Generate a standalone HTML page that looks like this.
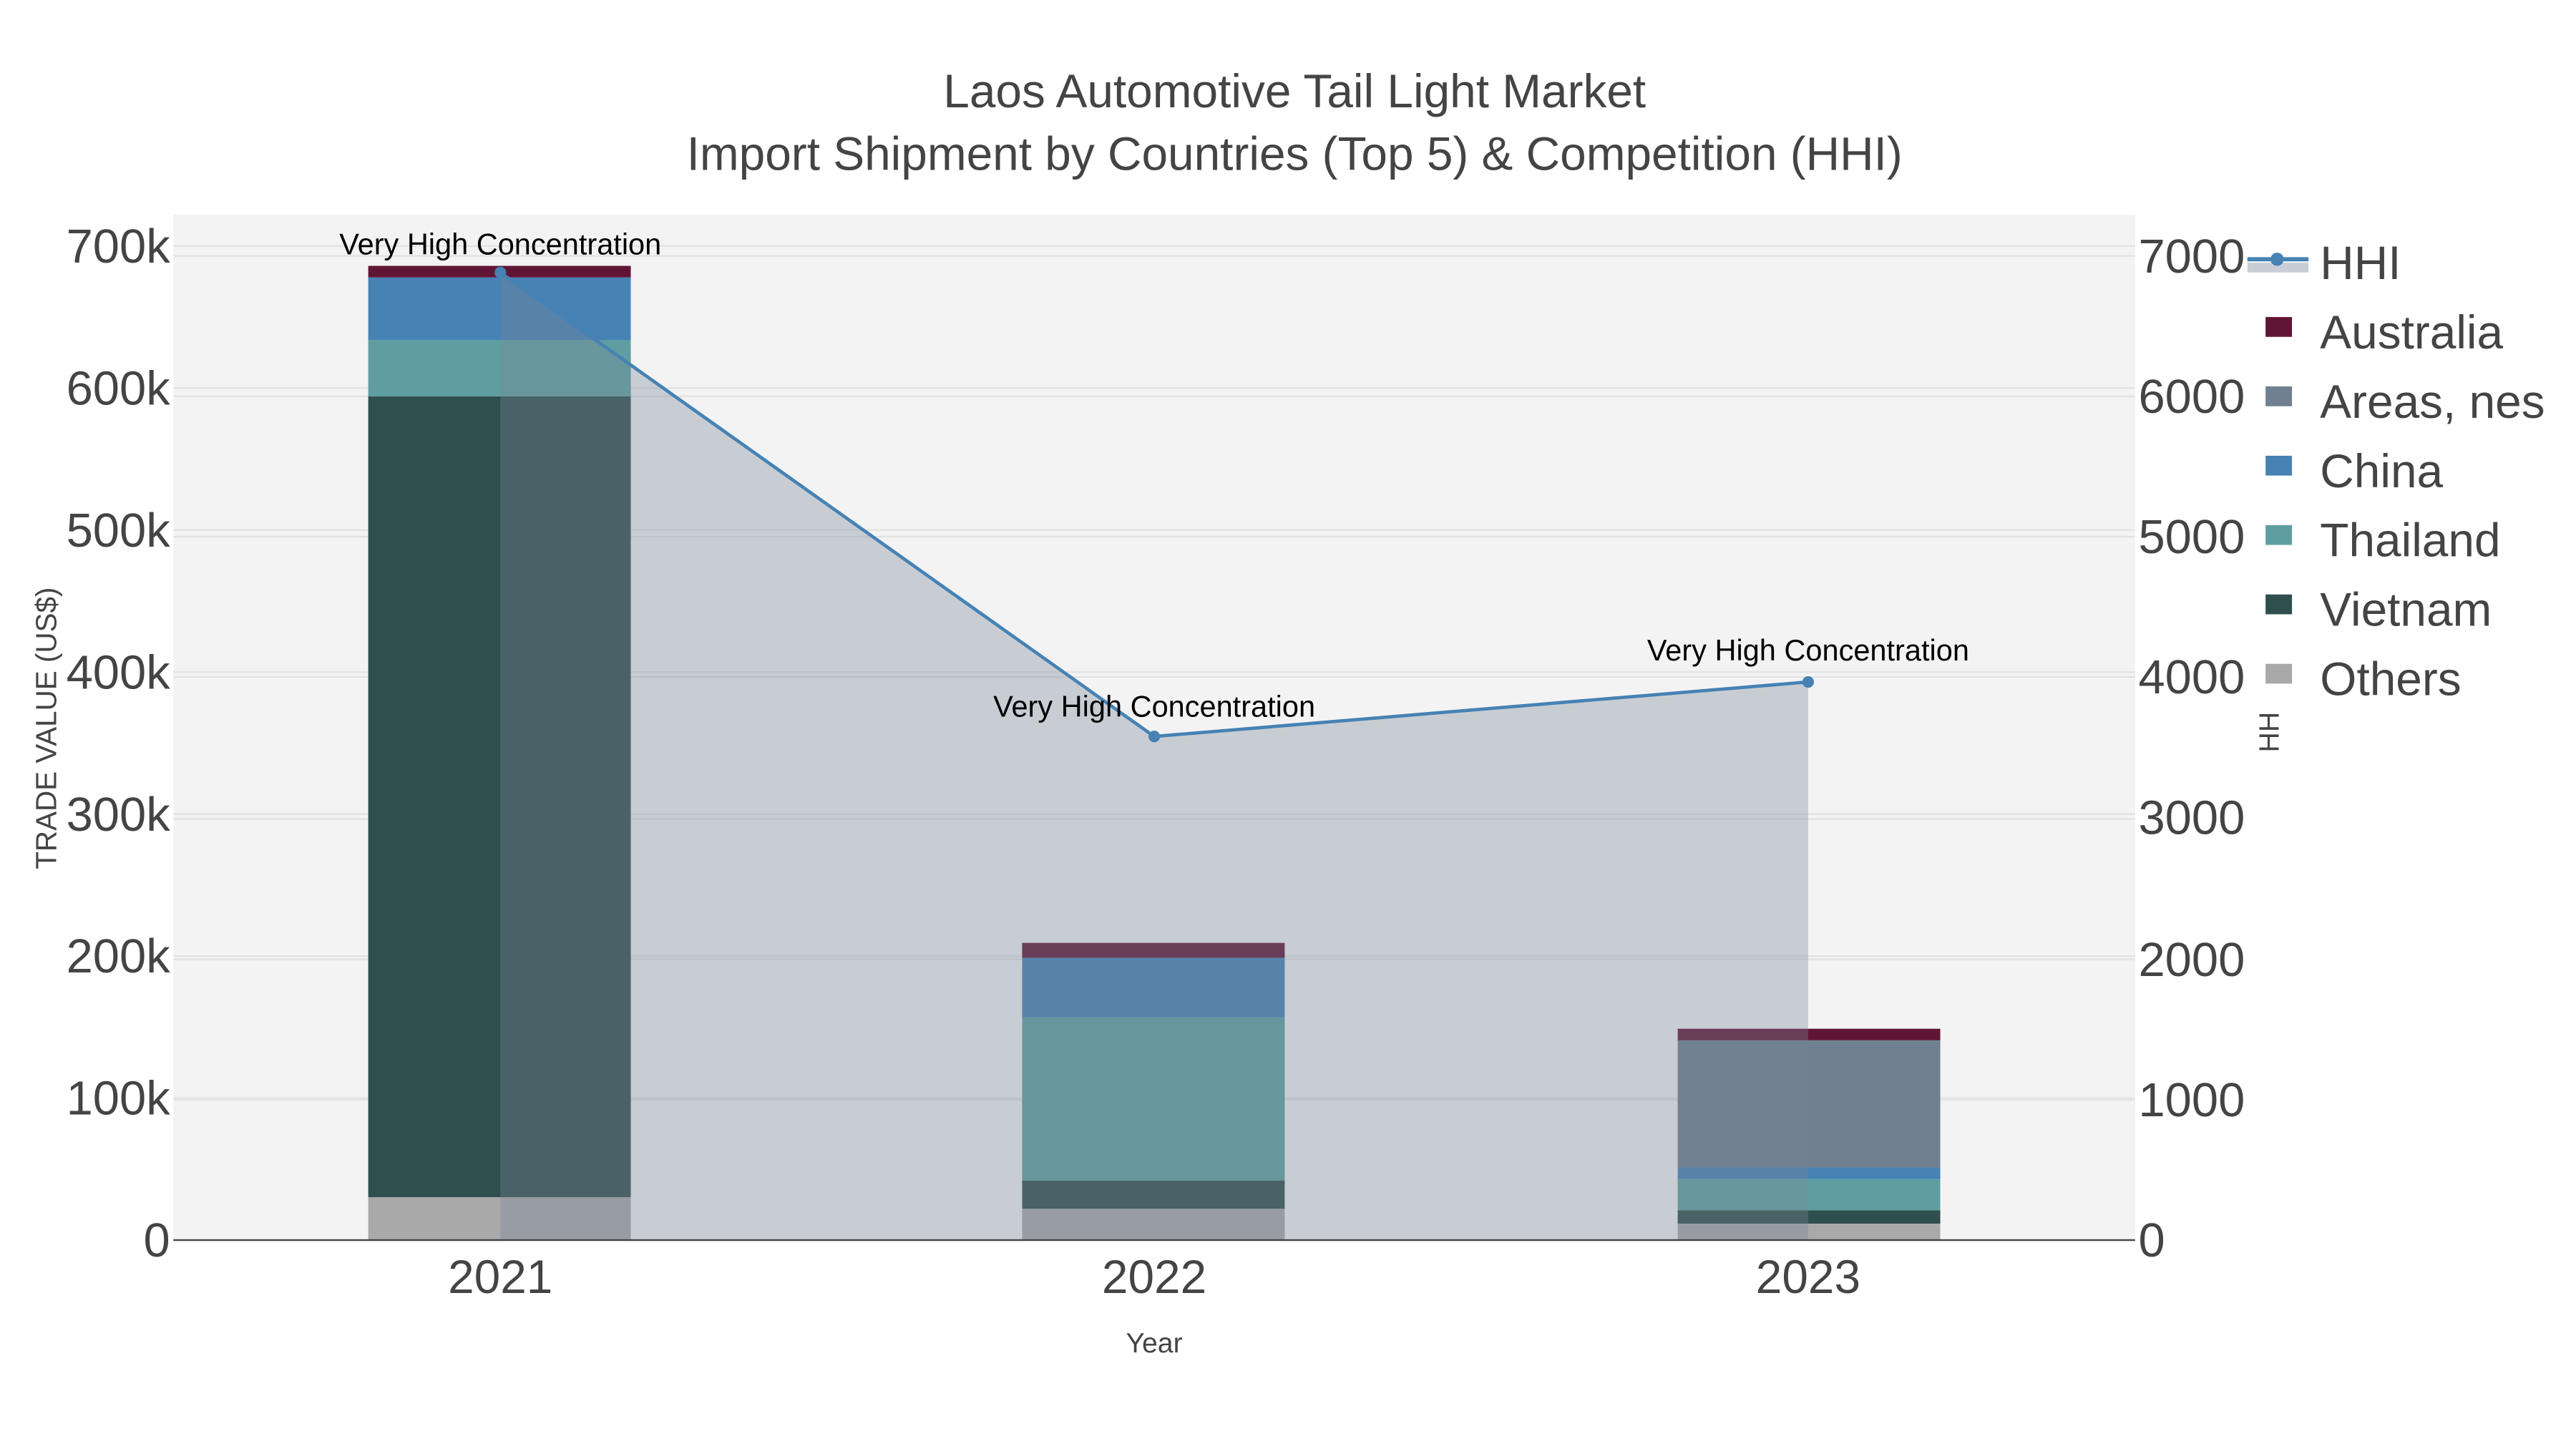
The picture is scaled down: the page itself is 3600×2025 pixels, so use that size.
<!DOCTYPE html>
<html><head><style>html,body{margin:0;padding:0;background:#fff}svg{display:block}text{font-family:"Liberation Sans",sans-serif}</style></head><body>
<svg width="3600" height="2025" viewBox="0 0 1560 877.5" xmlns="http://www.w3.org/2000/svg">
<rect width="1560" height="877.5" fill="#fff"/>
<rect x="105" y="130" width="1188" height="621" fill="#f3f3f3"/>
<g stroke="#e2e2e2" stroke-width="1">
<line x1="105" x2="1293" y1="665" y2="665"/><line x1="105" x2="1293" y1="579" y2="579"/><line x1="105" x2="1293" y1="493" y2="493"/><line x1="105" x2="1293" y1="407" y2="407"/><line x1="105" x2="1293" y1="321" y2="321"/><line x1="105" x2="1293" y1="235" y2="235"/><line x1="105" x2="1293" y1="149" y2="149"/>
<line x1="105" x2="1293" y1="666" y2="666"/><line x1="105" x2="1293" y1="581" y2="581"/><line x1="105" x2="1293" y1="496" y2="496"/><line x1="105" x2="1293" y1="410" y2="410"/><line x1="105" x2="1293" y1="325" y2="325"/><line x1="105" x2="1293" y1="240" y2="240"/><line x1="105" x2="1293" y1="155" y2="155"/>
</g>
<rect x="223" y="725" width="159" height="26" fill="#a9a9a9"/>
<rect x="223" y="240" width="159" height="485" fill="#2f4f4f"/>
<rect x="223" y="206" width="159" height="34" fill="#5f9ea0"/>
<rect x="223" y="168" width="159" height="38" fill="#4682b4"/>
<rect x="223" y="161" width="159" height="7" fill="#611535"/>
<rect x="619" y="732" width="159" height="19" fill="#a9a9a9"/>
<rect x="619" y="715" width="159" height="17" fill="#2f4f4f"/>
<rect x="619" y="616" width="159" height="99" fill="#5f9ea0"/>
<rect x="619" y="580" width="159" height="36" fill="#4682b4"/>
<rect x="619" y="571" width="159" height="9" fill="#611535"/>
<rect x="1016" y="741" width="159" height="10" fill="#a9a9a9"/>
<rect x="1016" y="733" width="159" height="8" fill="#2f4f4f"/>
<rect x="1016" y="714" width="159" height="19" fill="#5f9ea0"/>
<rect x="1016" y="707" width="159" height="7" fill="#4682b4"/>
<rect x="1016" y="630" width="159" height="77" fill="#708090"/>
<rect x="1016" y="623" width="159" height="7" fill="#611535"/>
<polygon points="303,165 699,446 1095,413 1095,751 303,751" fill="#778899" fill-opacity="0.35"/>
<polyline points="303,165 699,446 1095,413" fill="none" stroke="#4682b4" stroke-width="2"/>
<circle cx="303" cy="165" r="3.5" fill="#4682b4"/><circle cx="699" cy="446" r="3.5" fill="#4682b4"/><circle cx="1095" cy="413" r="3.5" fill="#4682b4"/>
<line x1="105" x2="1293" y1="751" y2="751" stroke="#444" stroke-width="1"/>
<g font-size="18" fill="#000" text-anchor="middle">
<text x="303" y="154">Very High Concentration</text>
<text x="699" y="434">Very High Concentration</text>
<text x="1095" y="400">Very High Concentration</text>
</g>
<g font-size="28.5" fill="#444" text-anchor="middle">
<text x="784" y="65">Laos Automotive Tail Light Market</text>
<text x="784" y="103">Import Shipment by Countries (Top 5) &amp; Competition (HHI)</text>
<text x="303" y="783">2021</text><text x="699" y="783">2022</text><text x="1095" y="783">2023</text>
</g>
<text x="699" y="819" font-size="17" fill="#444" text-anchor="middle">Year</text>
<text transform="translate(34,441) rotate(-90)" font-size="17.5" fill="#444" text-anchor="middle">TRADE VALUE (US$)</text>
<text transform="translate(1380,441) rotate(-90)" font-size="17" fill="#444" text-anchor="middle">HHI</text>
<g font-size="29" fill="#444" text-anchor="end">
<text x="103" y="761">0</text><text x="103" y="675">100k</text><text x="103" y="589">200k</text><text x="103" y="503">300k</text><text x="103" y="417">400k</text><text x="103" y="331">500k</text><text x="103" y="245">600k</text><text x="103" y="159">700k</text>
</g>
<g font-size="29" fill="#444">
<text x="1295" y="761">0</text><text x="1295" y="676">1000</text><text x="1295" y="591">2000</text><text x="1295" y="505">3000</text><text x="1295" y="420">4000</text><text x="1295" y="335">5000</text><text x="1295" y="250">6000</text><text x="1295" y="165">7000</text>
</g>
<rect x="1359" y="140" width="201" height="290" fill="#fff"/>
<rect x="1361" y="159" width="37" height="6" fill="#c9ced6"/>
<line x1="1361" x2="1398" y1="157" y2="157" stroke="#4682b4" stroke-width="2.5"/>
<circle cx="1379" cy="157" r="4" fill="#4682b4"/>
<rect x="1372" y="192" width="16" height="12" fill="#611535"/>
<rect x="1372" y="234" width="16" height="12" fill="#708090"/>
<rect x="1372" y="276" width="16" height="12" fill="#4682b4"/>
<rect x="1372" y="318" width="16" height="12" fill="#5f9ea0"/>
<rect x="1372" y="360" width="16" height="12" fill="#2f4f4f"/>
<rect x="1372" y="402" width="16" height="12" fill="#a9a9a9"/>
<g font-size="28.5" fill="#444">
<text x="1405" y="169">HHI</text><text x="1405" y="211">Australia</text><text x="1405" y="253">Areas, nes</text><text x="1405" y="295">China</text><text x="1405" y="337">Thailand</text><text x="1405" y="379">Vietnam</text><text x="1405" y="421">Others</text>
</g>
</svg>
</body></html>
